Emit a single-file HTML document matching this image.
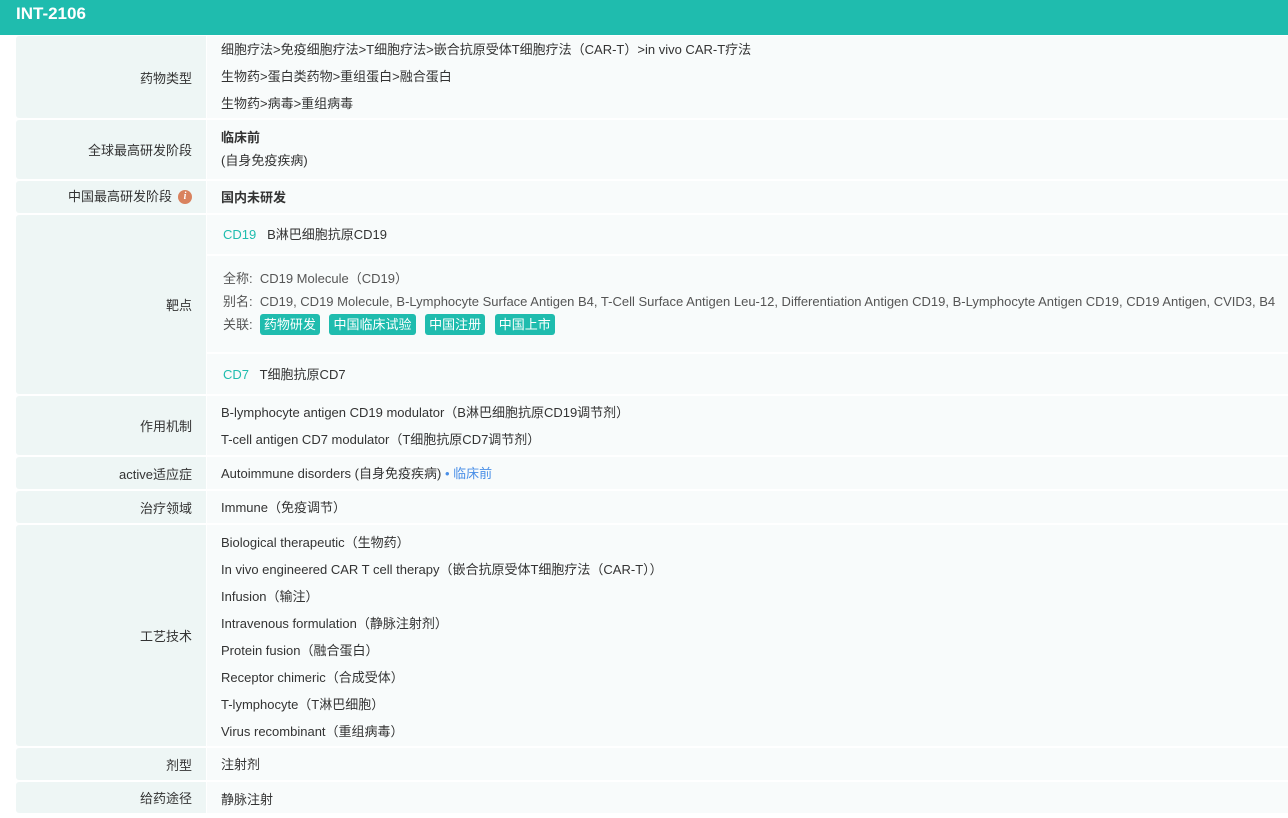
<!DOCTYPE html>
<html><head><meta charset="utf-8"><style>
*{margin:0;padding:0;box-sizing:border-box}
body{width:1288px;height:813px;overflow:hidden;background:#fff;font-family:"Liberation Sans","Noto Sans CJK SC",sans-serif;font-size:13px;color:#333}
.hd{position:absolute;left:0;top:0;width:1288px;height:35px;background:#1fbcae;color:#fff;font-weight:bold;font-size:17px;padding:4px 0 0 16px}
.l{position:absolute;left:16px;width:190px;background:#eef6f5;text-align:right;padding-right:14px;display:flex;align-items:center;justify-content:flex-end;border-radius:3px 0 0 3px}
.v{position:absolute;left:207px;width:1081px;background:#f8fbfb;padding-left:14px}
.ln{height:27px;line-height:27px;white-space:nowrap}
.t{color:#1fbcae}
.g{color:#555}
.tag{display:inline-block;background:#1fbcae;color:#fff;border-radius:3px;padding:0 4px;height:21px;line-height:21px;margin-right:6px}
.i{display:inline-block;width:14px;height:14px;border-radius:50%;background:#d9825e;color:#fff;font-size:10px;font-style:italic;font-weight:bold;text-align:center;line-height:14px;margin-left:6px;font-family:"Liberation Serif",serif}
</style></head><body>
<div class="hd">INT-2106</div>

<div class="l" style="top:36px;height:82px">药物类型</div>
<div class="v" style="top:36px;height:82px;padding-top:0">
<div class="ln">细胞疗法&gt;免疫细胞疗法&gt;T细胞疗法&gt;嵌合抗原受体T细胞疗法（CAR-T）&gt;in vivo CAR-T疗法</div>
<div class="ln">生物药&gt;蛋白类药物&gt;重组蛋白&gt;融合蛋白</div>
<div class="ln">生物药&gt;病毒&gt;重组病毒</div></div>

<div class="l" style="top:120px;height:59px">全球最高研发阶段</div>
<div class="v" style="top:120px;height:59px;padding-top:6px;line-height:23px"><b>临床前</b><br>(自身免疫疾病)</div>

<div class="l" style="top:181px;height:32px"><span style="line-height:14px">中国最高研发阶段</span><span class="i">i</span></div>
<div class="v" style="top:181px;height:32px;line-height:34px"><b>国内未研发</b></div>

<div class="l" style="top:215px;height:179px">靶点</div>
<div class="v" style="top:215px;height:39px;line-height:40px;padding-left:16px"><span class="t">CD19</span>&nbsp;&nbsp; B淋巴细胞抗原CD19</div>
<div class="v g" style="top:256px;height:96px;padding-left:16px;padding-top:11px;line-height:23px">全称: &nbsp;CD19 Molecule（CD19）<br>别名: &nbsp;CD19, CD19 Molecule, B-Lymphocyte Surface Antigen B4, T-Cell Surface Antigen Leu-12, Differentiation Antigen CD19, B-Lymphocyte Antigen CD19, CD19 Antigen, CVID3, B4<br>关联: &nbsp;<span class="tag">药物研发</span> <span class="tag">中国临床试验</span> <span class="tag">中国注册</span> <span class="tag">中国上市</span></div>
<div class="v" style="top:354px;height:40px;line-height:42px;padding-left:16px"><span class="t">CD7</span>&nbsp;&nbsp; T细胞抗原CD7</div>

<div class="l" style="top:396px;height:59px">作用机制</div>
<div class="v" style="top:396px;height:59px;padding-top:3px">
<div class="ln">B-lymphocyte antigen CD19 modulator（B淋巴细胞抗原CD19调节剂）</div>
<div class="ln">T-cell antigen CD7 modulator（T细胞抗原CD7调节剂）</div></div>

<div class="l" style="top:457px;height:32px">active适应症</div>
<div class="v" style="top:457px;height:32px;line-height:34px">Autoimmune disorders (自身免疫疾病) <span style="color:#4a8fe7">• 临床前</span></div>

<div class="l" style="top:491px;height:32px">治疗领域</div>
<div class="v" style="top:491px;height:32px;line-height:34px">Immune（免疫调节）</div>

<div class="l" style="top:525px;height:221px">工艺技术</div>
<div class="v" style="top:525px;height:221px;padding-top:4px">
<div class="ln">Biological therapeutic（生物药）</div>
<div class="ln">In vivo engineered CAR T cell therapy（嵌合抗原受体T细胞疗法（CAR-T））</div>
<div class="ln">Infusion（输注）</div>
<div class="ln">Intravenous formulation（静脉注射剂）</div>
<div class="ln">Protein fusion（融合蛋白）</div>
<div class="ln">Receptor chimeric（合成受体）</div>
<div class="ln">T-lymphocyte（T淋巴细胞）</div>
<div class="ln">Virus recombinant（重组病毒）</div></div>

<div class="l" style="top:748px;height:32px">剂型</div>
<div class="v" style="top:748px;height:32px;line-height:34px">注射剂</div>

<div class="l" style="top:782px;height:31px">给药途径</div>
<div class="v" style="top:782px;height:31px;line-height:36px">静脉注射</div>
</body></html>
